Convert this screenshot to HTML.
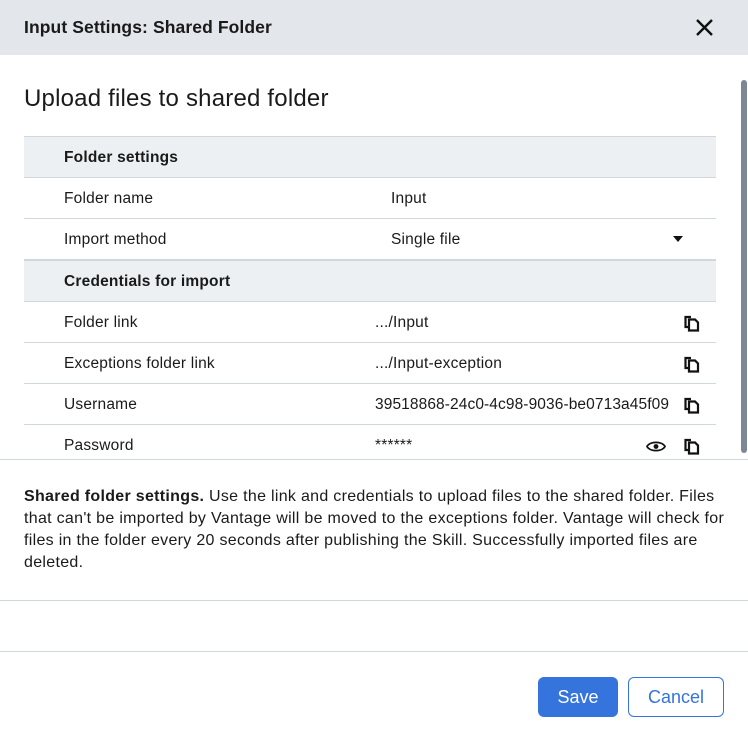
<!DOCTYPE html>
<html><head><style>
*{margin:0;padding:0;box-sizing:border-box}
body{width:748px;height:740px;overflow:hidden;background:#fff;font-family:"Liberation Sans",sans-serif;color:#1a1a1a;position:relative}
.abs{position:absolute}
.hdr{left:0;top:0;width:748px;height:55px;background:#e3e7eb}
.t{font-size:17.5px;font-weight:bold;left:24px;top:17px;letter-spacing:0.1px}
.row{position:absolute;left:24px;width:692px;border-bottom:1px solid #d0d8de;font-size:15.5px;letter-spacing:0.2px}
.row span{position:absolute;top:12px}
.sec{background:#edf0f3;font-weight:bold;border-top:1px solid #d0d8de}
.cp{position:absolute;left:660px;top:12px}
</style></head><body>
<div class="abs hdr"></div>
<div class="abs t">Input Settings: Shared Folder</div>
<svg class="abs" style="left:695px;top:18px" width="19" height="19" viewBox="0 0 19 19"><path d="M2 2L17 17M17 2L2 17" stroke="#111" stroke-width="2.4"/></svg>
<div class="abs" style="left:24px;top:85px;font-size:24px;letter-spacing:0.2px">Upload files to shared folder</div>

<div class="row sec" style="top:136px;height:42px"><span style="left:40px">Folder settings</span></div>
<div class="row" style="top:178px;height:41px"><span style="left:40px">Folder name</span><span style="left:367px">Input</span></div>
<div class="row" style="top:219px;height:41px"><span style="left:40px">Import method</span><span style="left:367px">Single file</span>
<svg style="position:absolute;left:649px;top:17px" width="10" height="6"><path d="M0 0H10L5 6Z" fill="#111"/></svg></div>
<div class="row sec" style="top:260px;height:42px"><span style="left:40px">Credentials for import</span></div>
<div class="row" style="top:302px;height:41px"><span style="left:40px">Folder link</span><span style="left:351px">.../Input</span><svg class="cp" width="18" height="18"><use href="#c"/></svg></div>
<div class="row" style="top:343px;height:41px"><span style="left:40px">Exceptions folder link</span><span style="left:351px">.../Input-exception</span><svg class="cp" width="18" height="18"><use href="#c"/></svg></div>
<div class="row" style="top:384px;height:41px"><span style="left:40px">Username</span><span style="left:351px;font-size:15.5px;letter-spacing:0.1px">39518868-24c0-4c98-9036-be0713a45f09</span><svg class="cp" width="18" height="18"><use href="#c"/></svg></div>
<div class="row" style="top:425px;height:41px;border:none"><span style="left:40px">Password</span><span style="left:351px">******</span>
<svg style="position:absolute;left:622px;top:15px" width="20" height="13" viewBox="0 0 20 13"><path d="M1 6.5C4 1 16 1 19 6.5C16 12 4 12 1 6.5Z" fill="none" stroke="#111" stroke-width="1.8"/><circle cx="10" cy="6.5" r="2.4" fill="#111"/></svg>
<svg class="cp" width="18" height="18"><use href="#c"/></svg></div>

<svg width="0" height="0" style="position:absolute"><defs><g id="c" fill="none" stroke="#111" stroke-width="2.2"><path d="M7 3H1.5V13H4"/><path d="M5 5.5H11L14 8.5V16.5H5Z"/></g></defs></svg>

<div class="abs" style="left:0;top:459px;width:748px;height:142px;background:#fff;border-top:1px solid #d0d8de;border-bottom:1px solid #d0d8de"></div>
<div class="abs" style="left:741px;top:80px;width:6px;height:373px;background:#7d8896;border-radius:3px"></div>
<div class="abs" style="left:24px;top:486px;width:724px;font-size:16px;line-height:22px;letter-spacing:0.3px;white-space:nowrap">
<b>Shared folder settings.</b> Use the link and credentials to upload files to the shared folder. Files<br>that can't be imported by Vantage will be moved to the exceptions folder. Vantage will check for<br>files in the folder every 20 seconds after publishing the Skill. Successfully imported files are<br>deleted.</div>
<div class="abs" style="left:0;top:651px;width:748px;border-top:1px solid #d0d8de"></div>
<div class="abs" style="left:538px;top:677px;width:80px;height:40px;background:#3474dc;border-radius:6px;color:#fff;font-size:18px;text-align:center;line-height:40px">Save</div>
<div class="abs" style="left:628px;top:677px;width:96px;height:40px;border:1px solid #3474dc;border-radius:6px;color:#3474dc;font-size:18px;text-align:center;line-height:38px">Cancel</div>
</body></html>
